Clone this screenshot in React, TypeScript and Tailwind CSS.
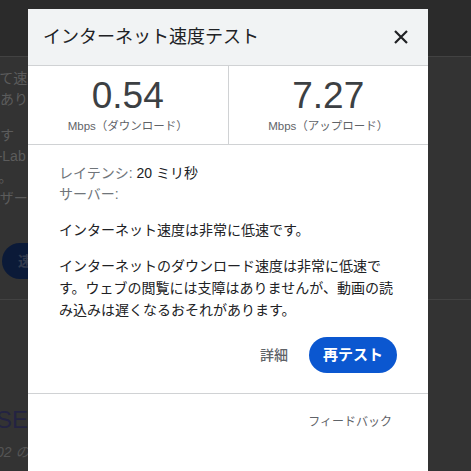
const font = { fontFamily: '"Liberation Sans", Arial, "Noto Sans CJK JP", sans-serif' };

const BackgroundPage = () => {
  return (
    <div className="absolute inset-0 bg-[#333333]">
      <div className="h-[57px] border-b border-[#424242] bg-[#2b2b2b]"></div>
      <div className="-ml-[14px] w-[42px] overflow-hidden text-[14px] leading-[21px] text-[#5c5c5c]">
        <div className="mt-[11px] whitespace-nowrap">ーて速度</div>
        <div className="whitespace-nowrap">があり</div>
        <div className="mt-[15px] whitespace-nowrap">ます</div>
        <div className="whitespace-nowrap">M-Lab</div>
        <div className="whitespace-nowrap">す。</div>
        <div className="whitespace-nowrap">ーザー</div>
      </div>
      <div className="ml-[2px] mt-[34px] flex h-[36px] w-[80px] items-center rounded-full bg-[#0b1a38] pl-[16px] text-[14px] font-bold text-[#333b4d]">
        速
      </div>
      <div className="mt-[20px] border-b border-[#424242]"></div>
      <div className="-ml-[4px] mt-[106px] whitespace-nowrap text-[24px] leading-[28px] text-[#232342]">SEN</div>
      <div className="-ml-[4px] mt-[8px] whitespace-nowrap text-[14px] italic text-[#555555]">02 の</div>
    </div>
  );
};

const Stat = ({ value, label }: { value: string; label: string }) => {
  return (
    <div className="flex flex-1 flex-col items-center justify-center">
      <div className="text-[37px] leading-[40px] text-[#3c4043]">{value}</div>
      <div className="mt-[2px] text-[11.5px] leading-[16px] text-[#5f6368]">{label}</div>
    </div>
  );
};

export default function App() {
  return (
    <div className="relative h-[471px] w-[471px] overflow-hidden" style={font}>
      <BackgroundPage />

      <div className="absolute left-[28px] top-[9px] w-[400px] bg-white">
        {/* header */}
        <div className="flex h-[57px] items-center justify-between border-b border-[#d0d2d4] bg-[#f1f3f4] pl-[15px] pr-[19px]">
          <h1 className="text-[18px] font-normal text-[#202124]">インターネット速度テスト</h1>
          <svg width="16" height="16" viewBox="0 0 16 16">
            <path d="M2 2 L14 14 M14 2 L2 14" stroke="#202124" strokeWidth="2.2" />
          </svg>
        </div>

        {/* results */}
        <div className="flex h-[79px] border-b border-[#d0d2d4]">
          <Stat value="0.54" label="Mbps（ダウンロード）" />
          <div className="w-px bg-[#d0d2d4]"></div>
          <Stat value="7.27" label="Mbps（アップロード）" />
        </div>

        {/* body */}
        <div className="px-[31px] pt-[18px] text-[14px] text-[#202124]">
          <div className="leading-[21px]">
            <div>
              <span className="text-[#70757a]">レイテンシ: </span>20 ミリ秒
            </div>
            <div className="text-[#70757a]">サーバー:</div>
          </div>
          <p className="mt-[14px] leading-[22px]">インターネット速度は非常に低速です。</p>
          <p className="mt-[14px] leading-[22px]">
            インターネットのダウンロード速度は非常に低速です。ウェブの閲覧には支障はありませんが、動画の読み込みは遅くなるおそれがあります。
          </p>
          <div className="mt-[16px] flex items-center justify-end gap-[21px] pb-[20px]">
            <button className="text-[14px] font-medium text-[#5f6368]">詳細</button>
            <button className="h-[36px] w-[88px] rounded-full bg-[#0b57d0] text-[15px] font-bold text-white">再テスト</button>
          </div>
        </div>

        {/* footer */}
        <div className="flex h-[80px] justify-end border-t border-[#d0d2d4] pr-[36px] pt-[19px]">
          <span className="text-[12px] leading-[18px] text-[#5f6368]">フィードバック</span>
        </div>
      </div>
    </div>
  );
}
